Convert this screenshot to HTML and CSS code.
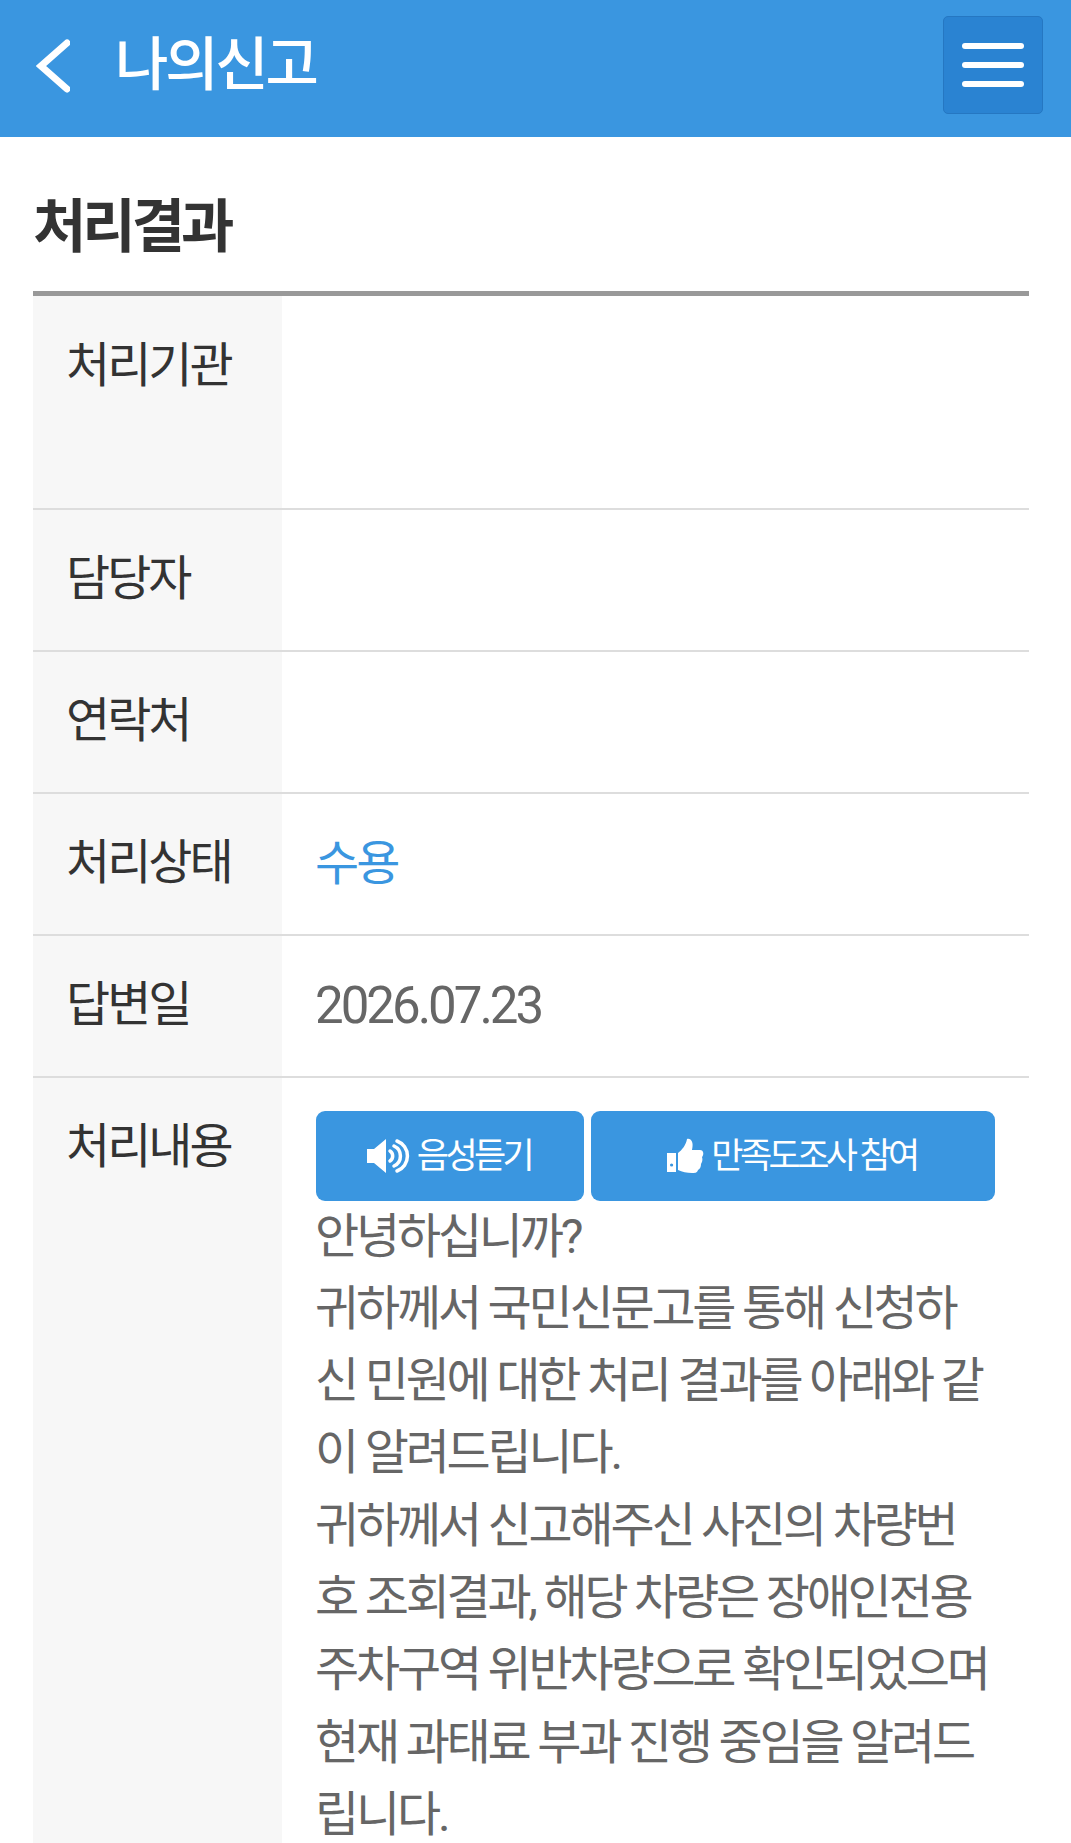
FILE: index.html
```html
<!DOCTYPE html>
<html lang="ko">
<head>
<meta charset="utf-8">
<title>나의신고</title>
<link rel="stylesheet" href="styles.css">
</head>
<body>
<header class="topbar">
  <a class="back" href="#" aria-label="뒤로">
    <svg class="back-icon" viewBox="0 0 34 56" aria-hidden="true"><path d="M31 5 L5 28 L31 51" fill="none" stroke="#fff" stroke-width="7" stroke-linecap="round" stroke-linejoin="miter"/></svg>
  </a>
  <h1 class="page-title">나의신고</h1>
  <button class="menu" type="button" aria-label="메뉴"><span></span><span></span><span></span></button>
</header>
<main class="content">
  <h2 class="section-title">처리결과</h2>
  <table class="result">
    <tbody>
      <tr class="row-tall"><th>처리기관</th><td></td></tr>
      <tr><th>담당자</th><td></td></tr>
      <tr><th>연락처</th><td></td></tr>
      <tr><th>처리상태</th><td class="status">수용</td></tr>
      <tr><th>답변일</th><td class="date">2026.07.23</td></tr>
      <tr class="row-last">
        <th>처리내용</th>
        <td>
          <div class="actions">
            <a class="btn btn-voice" href="#">
              <svg class="btn-icon" viewBox="0 0 44 36" aria-hidden="true">
                <path d="M0 11 H7 L19 1 V35 L7 25 H0 Z" fill="#fff"/>
                <path d="M23 13 A6 6 0 0 1 23 23 M27 8 A11 11 0 0 1 27 28 M30 3 A16 16 0 0 1 30 33" fill="none" stroke="#fff" stroke-width="3.5" stroke-linecap="round"/>
              </svg>
              <span>음성듣기</span>
            </a>
            <a class="btn btn-survey" href="#">
              <svg class="btn-icon-thumb" viewBox="0 0 38 36" aria-hidden="true">
                <path fill-rule="evenodd" d="M1 15 H10 V34 H1 Z M4 27 a1.6 1.6 0 1 0 3.2 0 a1.6 1.6 0 1 0 -3.2 0 Z" fill="#fff"/>
                <path d="M12 15 C16 12 20 7 21 1 C25 0 28 4 26 12 H34 C38 12 38 17 36 19 C37 22 36 24 35 26 C35 29 34 31 32 32 C31 35 29 35 26 35 C21 35 16 34 12 32 Z" fill="#fff"/>
              </svg>
              <span>만족도조사 참여</span>
            </a>
          </div>
          <p class="answer">안녕하십니까?<br>귀하께서 국민신문고를 통해 신청하신 민원에 대한 처리 결과를 아래와 같이 알려드립니다.<br>귀하께서 신고해주신 사진의 차량번호 조회결과, 해당 차량은 장애인전용주차구역 위반차량으로 확인되었으며 현재 과태료 부과 진행 중임을 알려드립니다.</p>
        </td>
      </tr>
    </tbody>
  </table>
</main>
</body>
</html>
```
FILE: styles.css
```css
* { box-sizing: border-box; }
html, body {
  margin: 0;
  padding: 0;
  height: 100vh;
  overflow: hidden;
  background: #fff;
}
body {
  font-family: Roboto, "Noto Sans CJK KR", sans-serif;
  font-size: 48px;
  letter-spacing: -3px;
  color: #666;
}
.topbar {
  display: flex;
  align-items: center;
  height: 137px;
  background: #3a96e0;
  padding: 0 28px 0 36px;
}
.back { display: block; line-height: 0; margin-bottom: 5px; }
.back-icon { width: 34px; height: 56px; display: block; }
.page-title {
  margin: 0 0 5px 45px;
  flex: 1;
  font-size: 58px;
  font-weight: 500;
  line-height: 1.2;
  color: #fff;
  letter-spacing: -3.2px;
}
.menu {
  display: flex;
  flex-direction: column;
  justify-content: center;
  align-items: center;
  gap: 13px;
  width: 100px;
  height: 98px;
  margin-bottom: 7px;
  padding: 0;
  background: #2a83d2;
  border: 1px solid #2577c2;
  border-radius: 5px;
}
.menu span {
  display: block;
  width: 62px;
  height: 6px;
  border-radius: 3px;
  background: #fff;
}
.content { padding: 0 42px 0 33px; }
.section-title {
  margin: 0;
  padding-top: 54px;
  height: 154px;
  font-size: 58px;
  font-weight: 700;
  line-height: 72px;
  color: #333;
  letter-spacing: -4px;
}
.result {
  width: 100%;
  table-layout: fixed;
  border-collapse: collapse;
  border-top: 5px solid #999;
}
.result tr { border-bottom: 2px solid #ddd; }
.result th, .result td {
  padding: 34px;
  height: 140px;
  line-height: 72px;
  vertical-align: top;
  text-align: left;
  font-weight: 400;
}
.result th {
  width: 249px;
  background: #f7f7f7;
  color: #333;
  padding: 33px 0 35px 33px;
}
.row-tall th, .row-tall td { height: 215px; }
.row-tall th { padding-top: 34px; }
.row-last { border-bottom: 0; }
.result .row-last th { padding-top: 33px; }
.result .status { color: #3a96e0; padding-left: 33px; }
.result .date { font-size: 51px; letter-spacing: -3px; padding-left: 33px; }
.actions { display: flex; gap: 7px; margin-top: -1px; }
.btn {
  display: flex;
  align-items: center;
  justify-content: center;
  height: 90px;
  border-radius: 9px;
  background: #3a96e0;
  color: #fff;
  font-size: 35px;
  line-height: 1;
  letter-spacing: -3.6px;
  text-decoration: none;
}
.btn span { padding-top: 2px; }
.btn-voice { width: 268px; padding-right: 2px; }
.btn-survey { flex: 1; padding-right: 3px; }
.btn-icon { width: 44px; height: 36px; margin-right: 6px; }
.btn-icon-thumb { width: 38px; height: 36px; margin-right: 7px; }
.answer {
  margin: 0 0 0 -1px;
  line-height: 72.3px;
  letter-spacing: -3.2px;
  word-break: break-all;
}
```
